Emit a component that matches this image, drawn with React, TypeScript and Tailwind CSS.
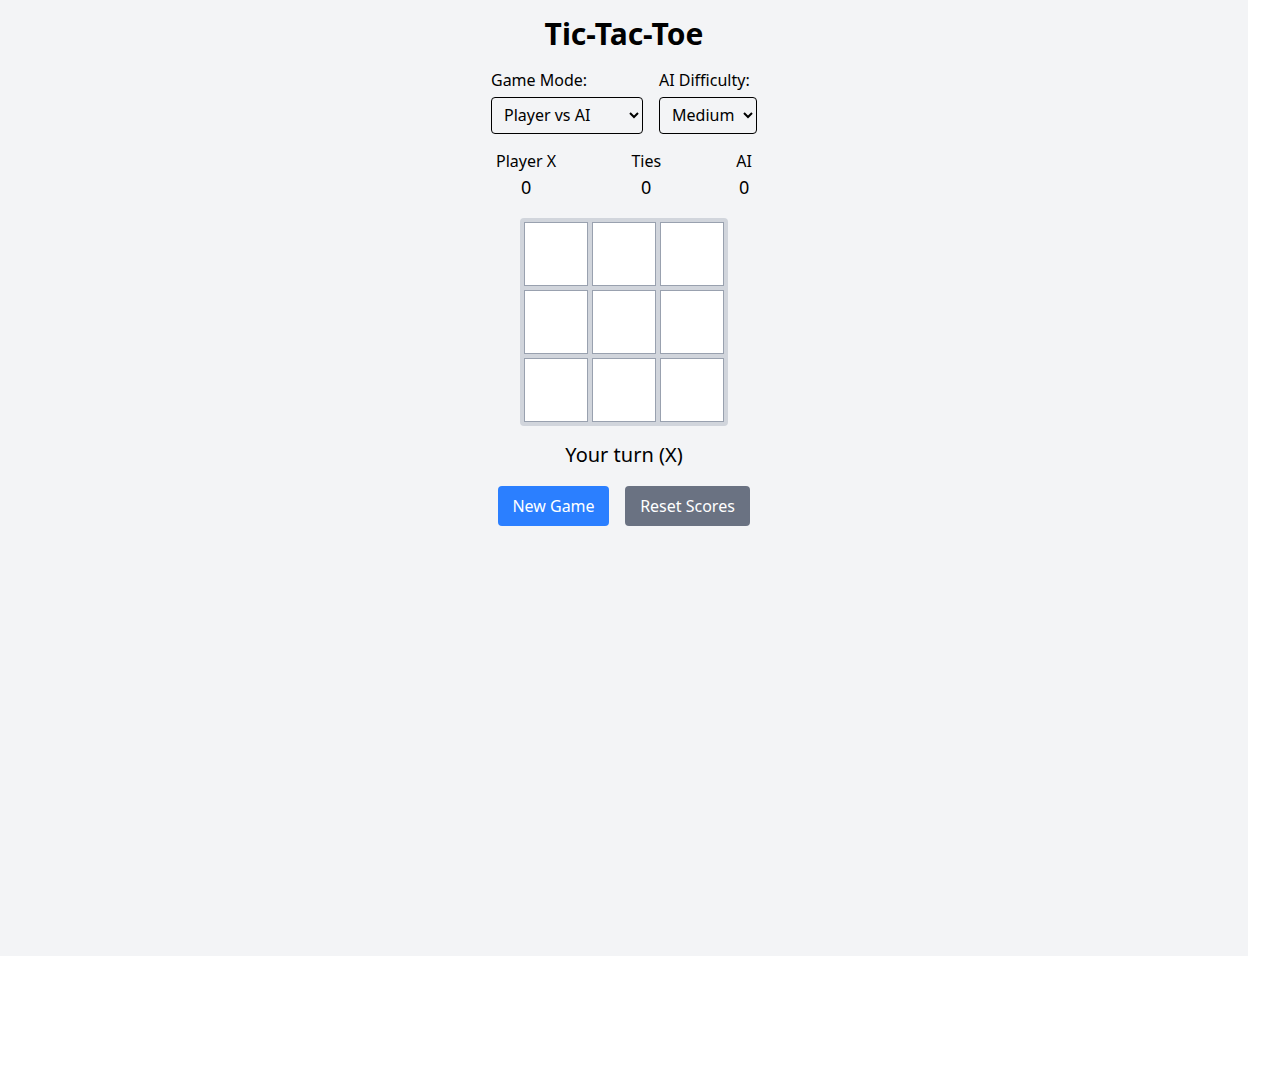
const cells = Array.from({ length: 9 }, () => "");

export default function App() {
  return (
    <div
      className="w-[1248px] h-[956px] bg-gray-100 text-black"
      style={{ fontFamily: '"Noto Sans", "DejaVu Sans", sans-serif' }}
    >
      <div className="flex flex-col items-center pt-4">
        <h1 className="text-3xl font-bold leading-9 mb-4">Tic-Tac-Toe</h1>

        <div className="flex gap-4 mb-[15px]">
          <label className="flex flex-col text-base leading-6">
            Game Mode:
            <select
              defaultValue="ai"
              className="mt-[5px] w-[152px] h-[37px] border border-black rounded pl-2 pr-1 pb-[2px] bg-gray-100 text-base"
            >
              <option value="ai">Player vs AI</option>
              <option value="pvp">Player vs Player</option>
            </select>
          </label>
          <label className="flex flex-col text-base leading-6">
            AI Difficulty:
            <select
              defaultValue="medium"
              className="mt-[5px] w-[98px] h-[37px] border border-black rounded pl-2 pr-0 pb-[2px] bg-gray-100 text-base"
            >
              <option value="easy">Easy</option>
              <option value="medium">Medium</option>
              <option value="hard">Hard</option>
            </select>
          </label>
        </div>

        <div className="w-64 flex justify-between mb-[17px]">
          {[
            ["Player X", "0"],
            ["Ties", "0"],
            ["AI", "0"],
          ].map(([label, value]) => (
            <div key={label} className="flex flex-col items-center">
              <span className="text-base leading-6">{label}</span>
              <span className="text-lg leading-7">{value}</span>
            </div>
          ))}
        </div>

        <div className="grid grid-cols-3 gap-1 p-1 bg-gray-300 rounded">
          {cells.map((c, i) => (
            <button
              key={i}
              className="w-16 h-16 bg-white border border-gray-400 text-3xl font-bold"
            >
              {c}
            </button>
          ))}
        </div>

        <p className="mt-[15px] text-xl leading-7">Your turn (X)</p>

        <div className="flex gap-4 mt-[17px]">
          <button className="h-10 w-[111px] rounded bg-blue-500 text-white text-base">
            New Game
          </button>
          <button className="h-10 w-[125px] rounded bg-gray-500 text-white text-base">
            Reset Scores
          </button>
        </div>
      </div>
    </div>
  );
}
